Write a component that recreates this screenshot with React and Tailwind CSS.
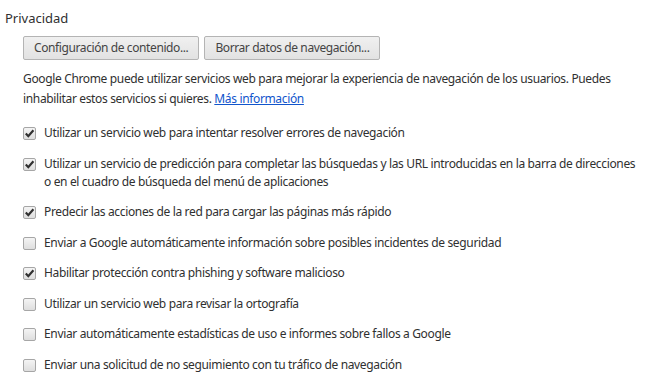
import React from 'react';

const items = [
    { checked: true, text: 'Utilizar un servicio web para intentar resolver errores de navegación' },
    {
        checked: true,
        text: 'Utilizar un servicio de predicción para completar las búsquedas y las URL introducidas en la barra de direcciones o en el cuadro de búsqueda del menú de aplicaciones',
    },
    { checked: true, text: 'Predecir las acciones de la red para cargar las páginas más rápido' },
    { checked: false, text: 'Enviar a Google automáticamente información sobre posibles incidentes de seguridad' },
    { checked: true, text: 'Habilitar protección contra phishing y software malicioso' },
    { checked: false, text: 'Utilizar un servicio web para revisar la ortografía' },
    { checked: false, text: 'Enviar automáticamente estadísticas de uso e informes sobre fallos a Google' },
    { checked: false, text: 'Enviar una solicitud de no seguimiento con tu tráfico de navegación' },
];

const Checkbox = ({ checked }) => (
    <span className="mt-[3px] flex h-[13px] w-[13px] shrink-0 items-center justify-center rounded-[2px] border border-[#a6a6a6] bg-gradient-to-b from-[#f4f4f4] to-[#dedede]">
        {checked && (
            <svg width="11" height="11" viewBox="0 0 11 11">
                <path d="M1.8 5.6 L4.3 8.2 L9.4 2.2" fill="none" stroke="#303030" strokeWidth="2.2" />
            </svg>
        )}
    </span>
);

const Button = ({ children }) => (
    <button className="h-[24px] rounded-[2px] border border-[#b4b4b4] bg-gradient-to-b from-[#f0f0f0] to-[#e2e2e2] px-[10px] text-[12px] tracking-[-0.4px] text-[#444]">
        {children}
    </button>
);

export default function App() {
    return (
        <div className="h-[384px] w-[648px] overflow-hidden bg-white pl-[5px] pt-[8px] text-[#303030]" style={{ fontFamily: '"Noto Sans", sans-serif' }}>
            <h3 className="text-[13px] leading-[20px]">Privacidad</h3>
            <div className="pl-[18px] pr-[6px]">
                <div className="mt-[8px] flex gap-[5px]">
                    <Button>Configuración de contenido...</Button>
                    <Button>Borrar datos de navegación...</Button>
                </div>
                <p className="mt-[9px] pr-[30px] text-[12px] leading-[20px] tracking-[-0.35px]">
                    Google Chrome puede utilizar servicios web para mejorar la experiencia de navegación de los usuarios. Puedes
                    inhabilitar estos servicios si quieres.{' '}
                    <a href="#" className="text-[#1155cc] underline">Más información</a>
                </p>
                <div className="mt-[15px] flex flex-col gap-[12.5px]">
                    {items.map((item, i) => (
                        <label key={i} className="flex gap-[8px] text-[12px] leading-[18px] tracking-[-0.35px]">
                            <Checkbox checked={item.checked} />
                            <span>{item.text}</span>
                        </label>
                    ))}
                </div>
            </div>
        </div>
    );
}
